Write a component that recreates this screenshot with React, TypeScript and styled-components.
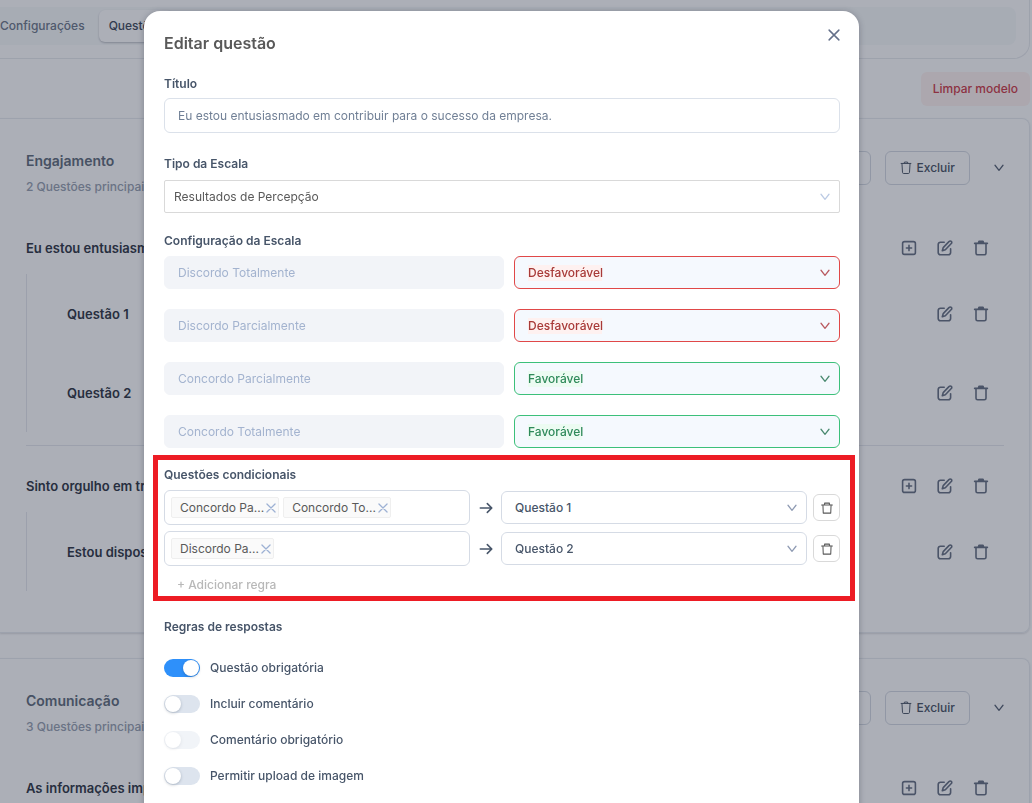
import React from "react";
import styled, { createGlobalStyle, css } from "styled-components";

const GlobalStyle = createGlobalStyle`
  *, *::before, *::after { box-sizing: border-box; }
  body {
    margin: 0;
    background: #ffffff;
    font-family: Inter, "Liberation Sans", sans-serif;
    font-size: 12px;
    line-height: 18px;
    color: #475569;
    overflow: hidden;
  }
  button, input, select { font: inherit; color: inherit; margin: 0; }
  button { background: none; border: 0; padding: 0; cursor: pointer; }
  h1, h2, p { margin: 0; font-size: inherit; font-weight: inherit; }
  svg { display: block; flex: none; }
`;

/* ---------- icons ---------- */

const Svg = ({ size = 16, width = 1.6, children }: { size?: number; width?: number; children: React.ReactNode }) => (
  <svg
    width={size}
    height={size}
    viewBox="0 0 16 16"
    fill="none"
    stroke="currentColor"
    strokeWidth={width}
    strokeLinecap="round"
    strokeLinejoin="round"
    aria-hidden="true"
  >
    {children}
  </svg>
);

const PlusSquareIcon = () => (
  <Svg>
    <rect x="1.6" y="1.6" width="12.8" height="12.8" rx="2" />
    <path d="M8 5.4v5.2M5.4 8h5.2" />
  </Svg>
);

const EditIcon = () => (
  <Svg>
    <path d="M7.2 2.2H3.400a2.200 2.200 0 0 0-2.200 2.200v8.200a2.200 2.200 0 0 0 2.200 2.200h8a2.200 2.200 0 0 0 2.200-2.200V8.800" />
    <path d="M12.200 1.400a1.400 1.400 0 0 1 2.100 0 1.400 1.400 0 0 1 0 2.100L8.300 9.700l-3 1 .9-3.100z" />
  </Svg>
);

const TrashIcon = () => (
  <Svg>
    <path d="M1.600 3.400h12.800" />
    <path d="M5.400 3.200l.6-1.900h4l.6 1.900z" fill="currentColor" />
    <path d="M3 3.600v9.600a1.600 1.600 0 0 0 1.600 1.600h6.800a1.600 1.600 0 0 0 1.600-1.600V3.600" />
  </Svg>
);

const BinIcon = () => (
  <Svg size={14} width={1.1}>
    <path d="M2.400 2.800h11.200M5.800 2.600l.5-1.400h3.400l.5 1.400" />
    <path d="M3.400 3l.6 10a1.400 1.400 0 0 0 1.400 1.300h5.200A1.400 1.400 0 0 0 12 13l.6-10" />
  </Svg>
);

const RuleTrashIcon = () => (
  <Svg size={12} width={1.4}>
    <path d="M.8 4h14.400M4.800 3.800V1.500h6.400v2.300" />
    <path d="M2.600 4.200l.4 10.600h10l.4-10.600" />
  </Svg>
);

const ChevronIcon = () => (
  <Svg size={10} width={2}>
    <path d="M1.600 3.600 8 11.800l6.400-8.200" />
  </Svg>
);

const CloseIcon = ({ size, width }: { size: number; width: number }) => (
  <Svg size={size} width={width}>
    <path d="M1.500 1.500l13 13M14.500 1.500l-13 13" />
  </Svg>
);

const ArrowIcon = () => (
  <Svg size={14} width={1.8}>
    <path d="M1.500 8h13M9.500 3 14.600 8l-5.100 5" />
  </Svg>
);

/* ---------- page ---------- */

const Page = styled.main`
  height: 100vh;
  overflow: hidden;
  padding-right: 2px;
  color: #333947;
`;

const TopBar = styled.header`
  height: 59px;
  padding: 7px 13px 13px 0;
  border: solid #e9ebef;
  border-width: 0 1px 1px 0;
  border-radius: 0 0 16px 0;
`;

const Tabs = styled.nav`
  display: flex;
  align-items: center;
  gap: 14px;
  height: 38px;
  background: #f8fafb;
  border-radius: 0 8px 8px 0;
`;

const Tab = styled.button<{ $active?: boolean }>`
  height: 32px;
  font-weight: 500;
  color: #707b8c;
  ${(p) =>
    p.$active &&
    css`
      padding: 0 10px;
      color: #454e5e;
      background: #ffffff;
      border-radius: 6px;
      box-shadow: 0 1px 2px rgba(15, 23, 42, 0.25);
    `}
`;

const Toolbar = styled.div`
  display: flex;
  justify-content: flex-end;
  padding: 13px 0 12px;
`;

const DangerButton = styled.button`
  height: 34px;
  padding: 0 12px;
  border-radius: 6px;
  background: #fff3f1;
  color: #d0404c;
  font-weight: 500;
`;

const Card = styled.section`
  padding: 32px 25px 41px 26px;
  margin-bottom: 25px;
  border: 1px solid #e9ecf0;
  border-left: 0;
  border-radius: 0 8px 8px 0;
  box-shadow: 0 1px 2px rgba(15, 23, 42, 0.14);
`;

const CardHeader = styled.div`
  display: flex;
  justify-content: space-between;
  align-items: flex-start;
  height: 81px;
`;

const CardTitle = styled.h2`
  font-size: 14px;
  line-height: 20px;
  font-weight: 600;
  color: #646f7e;
`;

const CardNote = styled.p`
  margin-top: 7px;
  font-weight: 500;
  color: #9aa3b2;
`;

const CardActions = styled.div`
  display: flex;
  align-items: center;
  gap: 14px;
`;

const OutlineButton = styled.button`
  display: flex;
  align-items: center;
  gap: 4px;
  height: 34px;
  padding: 0 14px 0 13px;
  border: 1px solid #d6dbe3;
  border-radius: 6px;
  font-weight: 500;
  color: #4d5768;
`;

const ToggleButton = styled.button`
  display: grid;
  align-items: center;
  justify-items: end;
  width: 20px;
  height: 34px;
  color: #5b6577;
`;

const Group = styled.div`
  & + & {
    margin-top: 13px;
    padding-top: 24px;
    border-top: 1px solid #e6e9ee;
  }
`;

const QuestionRow = styled.div`
  display: flex;
  align-items: center;
  justify-content: space-between;
  height: 32px;
  padding-right: 15px;
  font-size: 13px;
  font-weight: 600;
  white-space: nowrap;
`;

const RowActions = styled.div`
  display: flex;
  gap: 20px;
  color: #6a7486;
`;

const Children = styled.div`
  margin-top: 10px;
  padding-left: 40px;
  border-left: 1px solid #e6e9ee;
`;

const ChildSlot = styled.div`
  display: flex;
  flex-direction: column;
  justify-content: center;
  height: 79px;
`;

/* ---------- dialog ---------- */

const Overlay = styled.div`
  position: fixed;
  inset: 0;
  display: flex;
  justify-content: center;
  align-items: flex-start;
  padding: 11px 29px 0 0;
  overflow: hidden;
  background: rgba(18, 26, 49, 0.35);
`;

const Dialog = styled.div`
  flex: 0 1 715px;
  min-width: 0;
  min-height: 100vh;
  padding: 18px 19px 20px 20px;
  background: #ffffff;
  border-radius: 16px 16px 0 0;
  box-shadow: 0 1px 6px rgba(15, 23, 42, 0.3);
`;

const DialogHeader = styled.div`
  display: flex;
  justify-content: space-between;
  align-items: flex-start;
`;

const DialogTitle = styled.h1`
  font-size: 16px;
  line-height: 28px;
  font-weight: 600;
  color: #595959;
`;

const CloseButton = styled.button`
  display: grid;
  place-items: center;
  width: 12px;
  height: 12px;
  color: #64708a;
`;

const Label = styled.label`
  display: block;
  font-weight: 600;
  color: #475569;
`;

const Field = styled.div<{ $top: number; $gap: number }>`
  display: grid;
  gap: ${(p) => p.$gap}px;
  margin-top: ${(p) => p.$top}px;
`;

const TextInput = styled.input`
  width: 100%;
  height: 35px;
  padding: 0 13px;
  border: 1px solid #dbe1ea;
  border-radius: 6px;
  background: #ffffff;
  color: #718096;
  &:disabled {
    height: 33px;
    border-color: #f2f4f8;
    background: #f2f4f8;
    color: #a3b3cf;
  }
`;

type Tone = "plain" | "soft" | "bad" | "good";

const tones = {
  plain: css`
    border-color: #d9d9d9;
    border-radius: 2px;
    padding-left: 9px;
    color: #595959;
  `,
  soft: css`
    border-color: #d5dbe5;
    color: #475569;
    font-weight: 500;
  `,
  bad: css`
    border-color: #e04848;
    color: #a83a38;
    font-weight: 500;
    background: linear-gradient(#fef1f0, #fef1f0) 13px center / 74px 16px no-repeat #f5f9fe;
  `,
  good: css`
    border-color: #3cc07a;
    color: #2f8a5a;
    font-weight: 500;
    background: linear-gradient(#ecfbf2, #ecfbf2) 13px center / 54px 16px no-repeat #f5f9fe;
  `,
};

const arrows = { plain: "#bccbe4", soft: "#8f9bb3", bad: "#b95a60", good: "#4a8a70" };

const SelectBox = styled.div<{ $tone: Tone }>`
  display: grid;
  align-items: center;
  min-width: 0;
  color: ${(p) => arrows[p.$tone]};
  > * { grid-area: 1 / 1; }
  > svg {
    justify-self: end;
    margin-right: 10px;
    pointer-events: none;
  }
`;

const NativeSelect = styled.select<{ $tone: Tone }>`
  appearance: none;
  width: 100%;
  height: 33px;
  padding: 0 28px 0 13px;
  border: 1px solid;
  border-radius: 6px;
  background: #ffffff;
  ${(p) => tones[p.$tone]}
`;

const ScaleRows = styled.div`
  display: grid;
  gap: 20px;
`;

const ScaleRow = styled.div`
  display: grid;
  grid-template-columns: 340fr 326fr;
  gap: 10px;
`;

const Highlight = styled.section`
  margin: 7px -15px 0 -11px;
  padding: 6px 10px 2px 6px;
  border: 5px solid #ed1c24;
`;

const Rules = styled.div`
  display: grid;
  gap: 6px;
  margin-top: 6px;
`;

const Rule = styled.div`
  display: grid;
  grid-template-columns: 1fr 31px 1fr 33px;
  align-items: center;
`;

const ArrowCell = styled.span`
  display: grid;
  place-items: center;
  color: #475569;
`;

const TagField = styled.div`
  display: flex;
  align-items: center;
  gap: 4px;
  height: 35px;
  padding: 0 6px;
  border: 1px solid #d5dbe5;
  border-radius: 6px;
  overflow: hidden;
`;

const Tag = styled.span`
  display: flex;
  align-items: center;
  gap: 2px;
  height: 21px;
  padding: 0 2px 0 8px;
  border: 1px solid #efefef;
  border-radius: 2px;
  background: #fafafa;
  color: #595959;
  white-space: nowrap;
`;

const TagRemove = styled.button`
  color: #9db1d4;
`;

const RuleDelete = styled.button`
  display: grid;
  place-items: center;
  justify-self: end;
  width: 27px;
  height: 27px;
  border: 1px solid #d9d9d9;
  border-radius: 6px;
  color: #595959;
`;

const AddRule = styled.button`
  display: block;
  margin: 10px 0 0 13px;
  font-weight: 500;
  color: #b8b8b8;
`;

const SectionTitle = styled.h2`
  font-weight: 600;
  color: #475569;
`;

const Switches = styled.div`
  display: grid;
  gap: 18px;
  margin-top: 23px;
`;

const SwitchRow = styled.label`
  display: flex;
  align-items: center;
  gap: 10px;
  font-weight: 500;
  color: #475569;
`;

const Switch = styled.input`
  appearance: none;
  display: grid;
  align-items: center;
  width: 36px;
  height: 18px;
  padding: 0 1px;
  border-radius: 9px;
  background: #dde4ee;
  &::before {
    content: "";
    width: 16px;
    height: 16px;
    border-radius: 50%;
    background: #ffffff;
    box-shadow: 0 1px 3px rgba(15, 35, 60, 0.25);
  }
  &:checked { background: #2e90fa; }
  &:checked::before { justify-self: end; }
  &:disabled { opacity: 0.4; }
`;

/* ---------- composition ---------- */

const Select = ({ id, label, tone, value }: { id?: string; label?: string; tone: Tone; value: string }) => (
  <SelectBox $tone={tone}>
    <NativeSelect id={id} aria-label={label} $tone={tone} defaultValue={value}>
      <option>{value}</option>
    </NativeSelect>
    <ChevronIcon />
  </SelectBox>
);

const Actions = ({ add }: { add?: boolean }) => (
  <RowActions>
    {add && (
      <button aria-label="Adicionar">
        <PlusSquareIcon />
      </button>
    )}
    <button aria-label="Editar">
      <EditIcon />
    </button>
    <button aria-label="Excluir questão">
      <TrashIcon />
    </button>
  </RowActions>
);

type Question = { title: string; children: string[] };

const categories: { title: string; note: string; questions: Question[] }[] = [
  {
    title: "Engajamento",
    note: "2 Questões principais",
    questions: [
      { title: "Eu estou entusiasmado", children: ["Questão 1", "Questão 2"] },
      { title: "Sinto orgulho em trabalhar", children: ["Estou disposto"] },
    ],
  },
  {
    title: "Comunicação",
    note: "3 Questões principais",
    questions: [{ title: "As informações importantes", children: [] }],
  },
];

const scale: { answer: string; result: string; tone: Tone }[] = [
  { answer: "Discordo Totalmente", result: "Desfavorável", tone: "bad" },
  { answer: "Discordo Parcialmente", result: "Desfavorável", tone: "bad" },
  { answer: "Concordo Parcialmente", result: "Favorável", tone: "good" },
  { answer: "Concordo Totalmente", result: "Favorável", tone: "good" },
];

const rules = [
  { tags: ["Concordo Pa...", "Concordo To..."], target: "Questão 1" },
  { tags: ["Discordo Pa..."], target: "Questão 2" },
];

const options = [
  { label: "Questão obrigatória", on: true },
  { label: "Incluir comentário" },
  { label: "Comentário obrigatório", disabled: true },
  { label: "Permitir upload de imagem" },
];

export default function App() {
  return (
    <>
      <GlobalStyle />
      <Page>
        <TopBar>
          <Tabs>
            <Tab>Configurações</Tab>
            <Tab $active>Questões</Tab>
          </Tabs>
        </TopBar>
        <Toolbar>
          <DangerButton>Limpar modelo</DangerButton>
        </Toolbar>
        {categories.map((category) => (
          <Card key={category.title}>
            <CardHeader>
              <div>
                <CardTitle>{category.title}</CardTitle>
                <CardNote>{category.note}</CardNote>
              </div>
              <CardActions>
                <OutlineButton>Editar</OutlineButton>
                <OutlineButton>
                  <BinIcon />
                  Excluir
                </OutlineButton>
                <ToggleButton aria-label="Recolher">
                  <ChevronIcon />
                </ToggleButton>
              </CardActions>
            </CardHeader>
            {category.questions.map((question) => (
              <Group key={question.title}>
                <QuestionRow>
                  {question.title}
                  <Actions add />
                </QuestionRow>
                <Children>
                  {question.children.map((child) => (
                    <ChildSlot key={child}>
                      <QuestionRow>
                        {child}
                        <Actions />
                      </QuestionRow>
                    </ChildSlot>
                  ))}
                </Children>
              </Group>
            ))}
          </Card>
        ))}
      </Page>

      <Overlay>
        <Dialog role="dialog" aria-labelledby="dialog-title">
          <DialogHeader>
            <DialogTitle id="dialog-title">Editar questão</DialogTitle>
            <CloseButton aria-label="Fechar">
              <CloseIcon size={12} width={2} />
            </CloseButton>
          </DialogHeader>

          <Field $top={18} $gap={5}>
            <Label htmlFor="title">Título</Label>
            <TextInput id="title" defaultValue="Eu estou entusiasmado em contribuir para o sucesso da empresa." />
          </Field>

          <Field $top={22} $gap={7}>
            <Label htmlFor="scale">Tipo da Escala</Label>
            <Select id="scale" tone="plain" value="Resultados de Percepção" />
          </Field>

          <Field $top={19} $gap={6}>
            <SectionTitle>Configuração da Escala</SectionTitle>
            <ScaleRows>
              {scale.map((row) => (
                <ScaleRow key={row.answer}>
                  <TextInput disabled aria-label="Resposta" defaultValue={row.answer} />
                  <Select label={row.answer} tone={row.tone} value={row.result} />
                </ScaleRow>
              ))}
            </ScaleRows>
          </Field>

          <Highlight>
            <SectionTitle>Questões condicionais</SectionTitle>
            <Rules>
              {rules.map((rule) => (
                <Rule key={rule.target}>
                  <TagField>
                    {rule.tags.map((tag) => (
                      <Tag key={tag}>
                        {tag}
                        <TagRemove aria-label="Remover">
                          <CloseIcon size={10} width={2} />
                        </TagRemove>
                      </Tag>
                    ))}
                  </TagField>
                  <ArrowCell>
                    <ArrowIcon />
                  </ArrowCell>
                  <Select label="Questão condicional" tone="soft" value={rule.target} />
                  <RuleDelete aria-label="Excluir regra">
                    <RuleTrashIcon />
                  </RuleDelete>
                </Rule>
              ))}
            </Rules>
            <AddRule>+ Adicionar regra</AddRule>
          </Highlight>

          <Field $top={17} $gap={0}>
            <SectionTitle>Regras de respostas</SectionTitle>
            <Switches>
              {options.map((option) => (
                <SwitchRow key={option.label}>
                  <Switch type="checkbox" role="switch" defaultChecked={option.on} disabled={option.disabled} />
                  {option.label}
                </SwitchRow>
              ))}
            </Switches>
          </Field>
        </Dialog>
      </Overlay>
    </>
  );
}
